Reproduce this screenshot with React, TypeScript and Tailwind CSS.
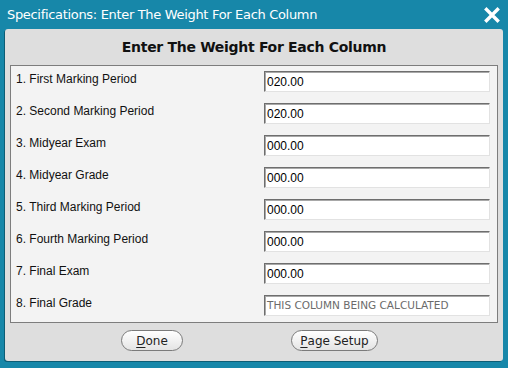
const rows = [
  { label: "1. First Marking Period", value: "020.00" },
  { label: "2. Second Marking Period", value: "020.00" },
  { label: "3. Midyear Exam", value: "000.00" },
  { label: "4. Midyear Grade", value: "000.00" },
  { label: "5. Third Marking Period", value: "000.00" },
  { label: "6. Fourth Marking Period", value: "000.00" },
  { label: "7. Final Exam", value: "000.00" },
];

function CloseIcon() {
  return (
    <svg width="16" height="16" viewBox="0 0 16 16">
      <path d="M2.5 2.5 L13.5 13.5 M13.5 2.5 L2.5 13.5" stroke="#fff" strokeWidth="3.4" strokeLinecap="square" />
    </svg>
  );
}

function WeightInput({ value, calc }: { value: string; calc?: boolean }) {
  return (
    <div className="flex h-[21px] w-[226px] items-center border border-t-[#6e6e6e] border-l-[#6e6e6e] border-r-[#e2e2e2] border-b-[#e2e2e2] bg-white pl-[2px] shadow-[inset_1px_1px_0_#a8a8a8]">
      {calc ? (
        <span className="font-['DejaVu_Sans',Verdana,sans-serif] text-[10.5px] text-[#6b6b6b]">{value}</span>
      ) : (
        <span className="font-['Liberation_Sans',Arial,sans-serif] text-[12px] text-black">{value}</span>
      )}
    </div>
  );
}

function DialogButton({ first, rest, width }: { first: string; rest: string; width: string }) {
  return (
    <button
      className={`flex h-[21px] ${width} items-center justify-center rounded-full border border-[#7b7b7b] bg-gradient-to-b from-[#ffffff] to-[#e4e4e4] font-['DejaVu_Sans',Verdana,sans-serif] text-[12px] text-[#222]`}
    >
      <span className="underline underline-offset-2">{first}</span>
      {rest}
    </button>
  );
}

export default function App() {
  return (
    <div className="flex h-[368px] w-[508px] flex-col bg-[#1787a9]">
      <div className="flex h-[29px] items-center justify-between pl-[7px] pr-[8px]">
        <span className="font-['DejaVu_Sans',Verdana,sans-serif] text-[13px] tracking-[-0.32px] text-white">
          Specifications: Enter The Weight For Each Column
        </span>
        <CloseIcon />
      </div>
      <div className="mx-[5px] mb-[7px] flex flex-1 flex-col rounded-[3px] bg-[#dedede] px-[5px] shadow-[-1px_1px_0_#0d5d75]">
        <div className="flex h-[36px] items-center justify-center font-['DejaVu_Sans',Verdana,sans-serif] text-[14px] font-bold tracking-[-0.3px] text-[#111]">
          Enter The Weight For Each Column
        </div>
        <div className="flex h-[258px] flex-col border border-[#7d7d7d] bg-[#f3f3f3] pt-[5px] pl-[5px]">
          {rows.map((r) => (
            <div key={r.label} className="flex h-[32px] items-start">
              <div className="-mt-[1px] w-[248px] font-['Liberation_Sans',Arial,sans-serif] text-[12px] text-[#111]">{r.label}</div>
              <WeightInput value={r.value} />
            </div>
          ))}
          <div className="flex h-[21px] items-start">
            <div className="-mt-[1px] w-[248px] font-['Liberation_Sans',Arial,sans-serif] text-[12px] text-[#111]">8. Final Grade</div>
            <WeightInput value="THIS COLUMN BEING CALCULATED" calc />
          </div>
        </div>
        <div className="mt-[7px] flex items-start pl-[111px]">
          <DialogButton first="D" rest="one" width="w-[62px]" />
          <div className="w-[108px]" />
          <DialogButton first="P" rest="age Setup" width="w-[87px]" />
        </div>
      </div>
    </div>
  );
}
